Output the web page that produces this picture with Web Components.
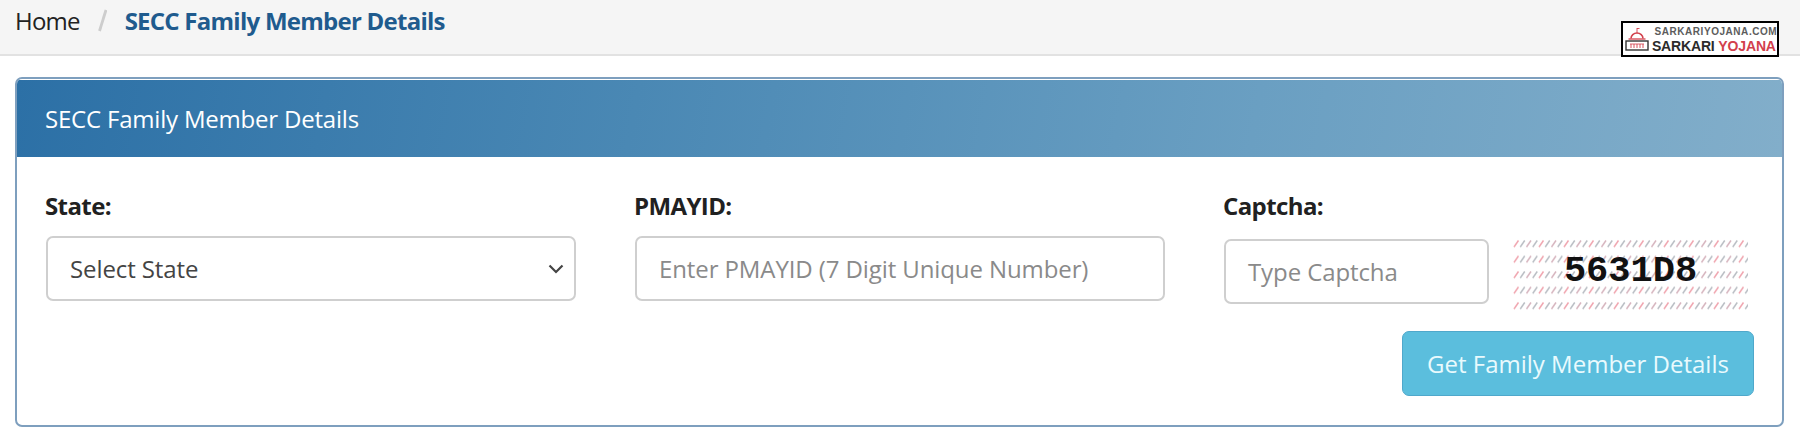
<!DOCTYPE html>
<html>
<head>
<meta charset="utf-8">
<title>SECC Family Member Details</title>
<style>
  html, body { margin: 0; padding: 0; background: #fff; }
  body { font-family: "Open Sans", "Noto Sans", sans-serif; color: #212529; height: 434px; overflow: hidden; }
</style>
</head>
<body>
<site-crumbs current="SECC Family Member Details">
  <brand-stamp slot="brand"></brand-stamp>
</site-crumbs>
<form-panel heading="SECC Family Member Details">
  <form-field label="State:">
    <select-box text="Select State"></select-box>
  </form-field>
  <form-field label="PMAYID:">
    <text-box text="Enter PMAYID (7 Digit Unique Number)"></text-box>
  </form-field>
  <form-field label="Captcha:">
    <captcha-row></captcha-row>
  </form-field>
  <action-button slot="actions">Get Family Member Details</action-button>
</form-panel>

<script>
/* small helper, every element below is just a template + shadow root */
function tpl(html) {
  let t = document.createElement("template");
  t.innerHTML = html;
  return t;
}

class SiteCrumbs extends HTMLElement {
  connectedCallback() {
    this.attachShadow({ mode: "open" }).appendChild(tpl(`
    <style>
    :host {
      display: flex;
      position: relative;
      align-items: center;
      box-sizing: content-box;
      height: 40px;
      padding: 0 15px 14px;
      background: #f5f5f5;
      border-bottom: 2px solid #e2e2e2;
    }
    .home { font-size: 24px; color: #222; letter-spacing: -.8px; }
    .sep { width: 9px; height: 23px; margin: 0 18px; }
    .now { font-size: 24px; font-weight: 700; color: #1f5b8e; letter-spacing: -.75px; }
    ::slotted([slot=brand]) { position: absolute; top: 21px; right: 21px; }
    </style>
    <span class="home">Home</span>
    <svg class="sep" viewBox="0 0 9 23"><path d="M8 1 1.500 22" stroke="#cdcdcd" stroke-width="2.800" fill="none"/></svg>
    <span class="now">${this.getAttribute("current")}</span>
    <slot name="brand"></slot>
    `).content.cloneNode(true));
  }
}
customElements.define("site-crumbs", SiteCrumbs);

class BrandStamp extends HTMLElement {
  connectedCallback() {
    this.attachShadow({ mode: "open" }).appendChild(tpl(`
    <style>
    :host {
      display: flex;
      align-items: flex-end;
      gap: 2px;
      width: 158px;
      height: 36px;
      box-sizing: border-box;
      padding: 0 2px 2px 1.500px;
      background: #fff;
      border: 2.500px solid #000;
      font-family: "Liberation Sans", Arial, sans-serif;
    }
    svg { width: 24px; height: 24px; flex: none; margin-bottom: 2px; }
    .words { display: flex; flex-direction: column; align-items: center; line-height: 1; flex: 1; }
    .site { font-size: 10px; font-weight: 700; color: #5c5c5c; letter-spacing: .55px; margin: 0 0 2px 4px; white-space: nowrap; }
    .name { font-size: 14px; font-weight: 700; color: #2b2b2b; letter-spacing: -.15px; white-space: nowrap; }
    .name b { color: #d2404c; }
    </style>
    <svg viewBox="0 0 24 24" fill="none">
      <path d="M12 1v5M12 1.500h2.500" stroke="#d2404c" stroke-width=".9"/>
      <path d="M6 11.500a6 5.500 0 0 1 12 0" stroke="#d2404c" stroke-width="1.600"/>
      <path d="M3.500 12h17" stroke="#d2404c" stroke-width="1.300"/>
      <rect x="1" y="14" width="22" height="9" stroke="#333" stroke-width="1.400"/>
      <path d="M5 17h14" stroke="#d2404c" stroke-width=".8"/>
      <path d="M6 17v4M9 17v4M12 17v4M15 17v4M18 17v4" stroke="#d2404c" stroke-width=".9"/>
    </svg>
    <div class="words">
      <span class="site">SARKARIYOJANA.COM</span>
      <span class="name">SARKARI <b>YOJANA</b></span>
    </div>
    `).content.cloneNode(true));
  }
}
customElements.define("brand-stamp", BrandStamp);

class FormPanel extends HTMLElement {
  connectedCallback() {
    this.attachShadow({ mode: "open" }).appendChild(tpl(`
    <style>
    :host {
      display: block;
      margin: 21px 16px 0 15px;
      height: 350px;
      box-sizing: border-box;
      border: 2px solid #7e9fbe;
      border-radius: 7px;
      overflow: hidden;
      background: #fff;
    }
    .head {
      height: 77px;
      margin-top: 1px;
      display: flex;
      align-items: center;
      padding-left: 28px;
      box-sizing: border-box;
      background: linear-gradient(100deg, #2c70a6 0%, #4a88b4 35%, #6a9fc2 70%, #82aeca 100%);
      color: #fff;
      font-size: 24px;
      letter-spacing: -.2px;
    }
    .body { padding: 29px 28px 0 29px; }
    .fields { display: grid; grid-template-columns: 530px 530px 1fr; column-gap: 59px; }
    .actions { display: flex; justify-content: flex-end; margin-top: 20px; }
    </style>
    <div class="head">${this.getAttribute("heading")}</div>
    <div class="body">
      <div class="fields"><slot></slot></div>
      <div class="actions"><slot name="actions"></slot></div>
    </div>
    `).content.cloneNode(true));
  }
}
customElements.define("form-panel", FormPanel);

class FormField extends HTMLElement {
  connectedCallback() {
    this.attachShadow({ mode: "open" }).appendChild(tpl(`
    <style>
    :host { display: block; }
    label { display: block; height: 50px; margin-left: -1px; font-size: 24px; font-weight: 700; color: #212121; letter-spacing: -.6px; line-height: 40px; }
    </style>
    <label>${this.getAttribute("label")}</label>
    <slot></slot>
    `).content.cloneNode(true));
  }
}
customElements.define("form-field", FormField);

const boxCss = `
  display: flex;
  align-items: center;
  box-sizing: border-box;
  height: 65px;
  padding: 0 22px;
  border: 2px solid #cfcfcf;
  border-radius: 7px;
  background: #fff;
  font-size: 24px;
  letter-spacing: -.1px;
`;

class SelectBox extends HTMLElement {
  connectedCallback() {
    this.attachShadow({ mode: "open" }).appendChild(tpl(`
    <style>
    :host { ${boxCss} display: flex; justify-content: space-between; color: #444; padding-right: 10px; }
    svg { width: 16px; height: 10px; }
    </style>
    <span>${this.getAttribute("text")}</span>
    <svg viewBox="0 0 16 10"><path d="M1.500 1.500 8 8l6.500-6.500" fill="none" stroke="#444" stroke-width="2.200"/></svg>
    `).content.cloneNode(true));
  }
}
customElements.define("select-box", SelectBox);

class TextBox extends HTMLElement {
  connectedCallback() {
    this.attachShadow({ mode: "open" }).appendChild(tpl(`
    <style>
    :host { ${boxCss} color: #8a8a8a; white-space: nowrap; }
    </style>
    <span>${this.getAttribute("text")}</span>
    `).content.cloneNode(true));
  }
}
customElements.define("text-box", TextBox);

class CaptchaRow extends HTMLElement {
  connectedCallback() {
    this.attachShadow({ mode: "open" }).appendChild(tpl(`
    <style>
    :host { display: flex; gap: 24px; align-items: flex-start; margin-top: 3px; }
    text-box { width: 265px; }
    .pic { position: relative; width: 235px; height: 72px; }
    .pic svg { display: block; }
    .code {
      position: absolute;
      inset: 0;
      display: flex;
      align-items: center;
      justify-content: center;
      font-family: "Liberation Mono", monospace;
      font-weight: 700;
      font-size: 37px;
      color: #111;
      padding-bottom: 8px;
      box-sizing: border-box;
    }
    </style>
    <text-box text="Type Captcha"></text-box>
    <div class="pic">
      <svg width="235" height="72" viewBox="0 0 235 72">
        <defs>
          <pattern id="hatch" width="25" height="15.500" patternUnits="userSpaceOnUse">
            <path d="M1 8 5.500 1.500" stroke="#f0a4ae" stroke-width="1.500"/>
            <path d="M7.250 8 11.750 1.500" stroke="#b9bdc3" stroke-width="1.500"/>
            <path d="M13.500 8 18 1.500" stroke="#d6b4be" stroke-width="1.500"/>
            <path d="M19.750 8 24.250 1.500" stroke="#b9bdc3" stroke-width="1.500"/>
          </pattern>
        </defs>
        <rect width="235" height="72" fill="url(#hatch)"/>
      </svg>
      <div class="code">5631D8</div>
    </div>
    `).content.cloneNode(true));
  }
}
customElements.define("captcha-row", CaptchaRow);

class ActionButton extends HTMLElement {
  connectedCallback() {
    this.attachShadow({ mode: "open" }).appendChild(tpl(`
    <style>
    :host {
      display: flex;
      align-items: center;
      justify-content: center;
      box-sizing: border-box;
      width: 352px;
      height: 65px;
      background: #5bbedd;
      border: 1px solid #4fa8cb;
      border-radius: 7px;
      color: #e9fafd;
      font-size: 24px;
    }
    </style>
    <slot></slot>
    `).content.cloneNode(true));
  }
}
customElements.define("action-button", ActionButton);
</script>
</body>
</html>
